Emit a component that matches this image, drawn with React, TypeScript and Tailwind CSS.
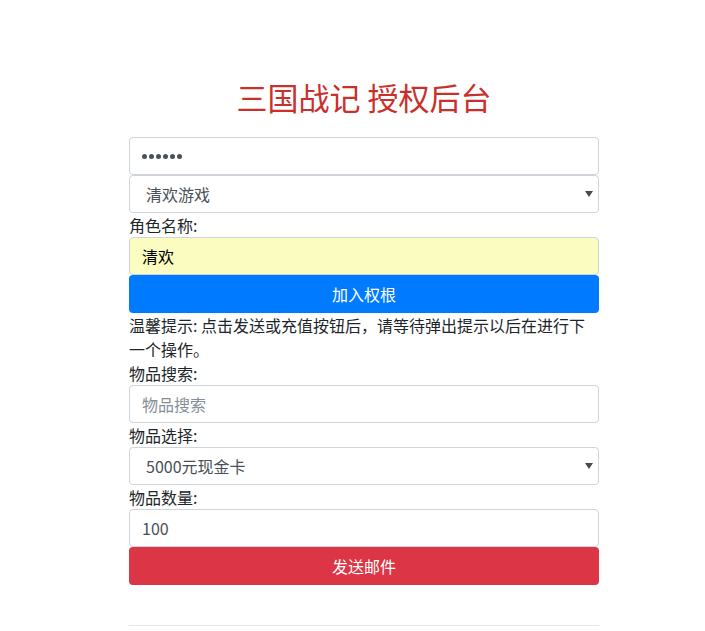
import React from "react";

const font = { fontFamily: '"Noto Sans CJK SC", "Noto Sans", sans-serif' };

function Caret() {
  return (
    <svg width="8" height="6" viewBox="0 0 8 6" className="absolute right-[5px] top-1/2 -translate-y-1/2">
      <path d="M0 0 L8 0 L4 6 Z" fill="#4a4a4a" />
    </svg>
  );
}

export default function App() {
  return (
    <div className="min-h-[631px] bg-white text-[#212529] text-[16px] leading-[24px]" style={font}>
      <div className="ml-[129px] w-[470px] flex flex-col">
        <h1 className="mt-[75px] h-[43px] text-center text-[31px] leading-[43px] text-[#c9302c] font-normal">
          三国战记 授权后台
        </h1>
        <div className="mt-[19px] flex flex-col">
          <div className="h-[38px] border border-[#ced4da] rounded-[4px] px-[12px] flex items-center gap-[2px]">
            {[0, 1, 2, 3, 4, 5].map((i) => (
              <span key={i} className="w-[5px] h-[5px] rounded-full bg-[#495057]" />
            ))}
          </div>
          <div className="relative h-[38px] border border-[#ced4da] rounded-[4px] pl-[16px] flex items-center text-[#495057]">
            清欢游戏
            <Caret />
          </div>
          <label className="h-[24px]">角色名称:</label>
          <div className="h-[38px] border border-[#ced4da] rounded-[4px] px-[12px] flex items-center bg-[#fafdbf] text-black">
            清欢
          </div>
          <button className="h-[38px] rounded-[4px] bg-[#007bff] text-white text-center">加入权根</button>
          <p>温馨提示: 点击发送或充值按钮后，请等待弹出提示以后在进行下一个操作。</p>
          <label className="h-[24px]">物品搜索:</label>
          <div className="h-[38px] border border-[#ced4da] rounded-[4px] px-[12px] flex items-center text-[#868e96]">
            物品搜索
          </div>
          <label className="h-[24px]">物品选择:</label>
          <div className="relative h-[38px] border border-[#ced4da] rounded-[4px] pl-[16px] flex items-center text-[#495057]">
            5000元现金卡
            <Caret />
          </div>
          <label className="h-[24px]">物品数量:</label>
          <div className="h-[38px] border border-[#ced4da] rounded-[4px] px-[12px] flex items-center text-[#495057]">
            100
          </div>
          <button className="h-[38px] rounded-[4px] bg-[#dc3545] text-white text-center">发送邮件</button>
        </div>
        <hr className="mt-[40px] border-t border-[#e5e5e5]" />
      </div>
    </div>
  );
}
